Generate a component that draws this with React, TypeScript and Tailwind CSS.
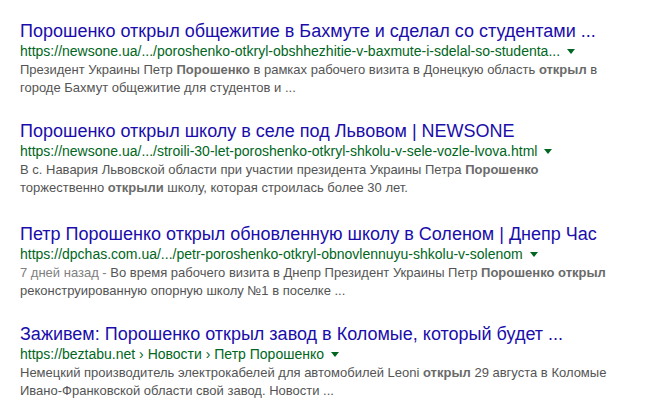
import React from 'react';

type Result = {
  title: string;
  url: string;
  lines: React.ReactNode[];
  extraTop?: boolean;
};

const B: React.FC<{ children: React.ReactNode }> = ({ children }) => (
  <b className="font-bold text-[#6a6a6a]">{children}</b>
);

const results: Result[] = [
  {
    title: 'Порошенко открыл общежитие в Бахмуте и сделал со студентами ...',
    url: 'https://newsone.ua/.../poroshenko-otkryl-obshhezhitie-v-baxmute-i-sdelal-so-studenta...',
    lines: [
      <>
        Президент Украины Петр <B>Порошенко</B> в рамках рабочего визита в Донецкую область <B>открыл</B> в
      </>,
      <>городе Бахмут общежитие для студентов и ...</>,
    ],
  },
  {
    title: 'Порошенко открыл школу в селе под Львовом | NEWSONE',
    url: 'https://newsone.ua/.../stroili-30-let-poroshenko-otkryl-shkolu-v-sele-vozle-lvova.html',
    lines: [
      <>
        В с. Навария Львовской области при участии президента Украины Петра <B>Порошенко</B>
      </>,
      <>
        торжественно <B>открыли</B> школу, которая строилась более 30 лет.
      </>,
    ],
  },
  {
    title: 'Петр Порошенко открыл обновленную школу в Соленом | Днепр Час',
    url: 'https://dpchas.com.ua/.../petr-poroshenko-otkryl-obnovlennuyu-shkolu-v-solenom',
    extraTop: true,
    lines: [
      <>
        <span className="text-[#808080]">7 дней назад - </span>Во время рабочего визита в Днепр Президент Украины Петр{' '}
        <B>Порошенко открыл</B>
      </>,
      <>реконструированную опорную школу №1 в поселке ...</>,
    ],
  },
  {
    title: 'Заживем: Порошенко открыл завод в Коломые, который будет ...',
    url: 'https://beztabu.net › Новости › Петр Порошенко',
    lines: [
      <>
        Немецкий производитель электрокабелей для автомобилей Leoni <B>открыл</B> 29 августа в Коломые
      </>,
      <>Ивано-Франковской области свой завод. Новости ...</>,
    ],
  },
];

export default function App() {
  return (
    <div
      className="w-[651px] h-[418px] bg-white overflow-hidden pl-5 pt-[19px]"
      style={{ fontFamily: '"Liberation Sans", Arial, sans-serif' }}
    >
      <div className="flex flex-col gap-[22px]">
        {results.map((r) => (
          <div key={r.title} className={r.extraTop ? 'flex flex-col mt-[3px]' : 'flex flex-col'}>
            <a className="text-[18px] leading-[24px] text-[#1a0dab] whitespace-nowrap">{r.title}</a>
            <div className="flex items-center text-[14px] leading-[16px] text-[#006621] whitespace-nowrap">
              <span>{r.url}</span>
              <svg width="8" height="5" viewBox="0 0 8 5" className="ml-[7px] mt-[1px]">
                <path d="M0 0h8L4 5z" fill="#006621" />
              </svg>
            </div>
            <div className="text-[13px] leading-[18px] text-[#545454] mt-[2px]">
              {r.lines.map((l, i) => (
                <div key={i} className="whitespace-nowrap">
                  {l}
                </div>
              ))}
            </div>
          </div>
        ))}
      </div>
    </div>
  );
}
